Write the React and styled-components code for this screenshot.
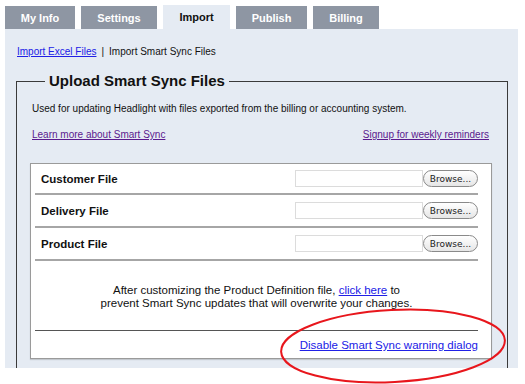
import React from 'react';
import styled, { createGlobalStyle } from 'styled-components';

const GlobalStyle = createGlobalStyle`
  html, body {
    margin: 0;
    padding: 0;
    background: #ffffff;
  }
  body {
    font-family: "Liberation Sans", Arial, sans-serif;
    color: #111;
  }
`;

const SPage = styled.div`
  position: relative;
  width: 525px;
  height: 384px;
  padding: 5px 0 0 5px;
  box-sizing: border-box;
  overflow: hidden;
`;

const STabBar = styled.div`
  display: flex;
  align-items: flex-end;
  gap: 6px;
  height: 24px;
`;

const STab = styled.div`
  display: flex;
  align-items: center;
  justify-content: center;
  width: ${props => props.width}px;
  height: ${props => (props.active ? 24 : 23)}px;
  background: ${props => (props.active ? '#e5ebf3' : '#8e96a3')};
  color: ${props => (props.active ? '#111' : '#ffffff')};
  font-size: 11px;
  font-weight: 700;
`;

const SPanel = styled.div`
  width: 513px;
  height: 339px;
  background: #e5ebf3;
  padding: 17px 10px 0 11px;
  box-sizing: border-box;
  overflow: hidden;
`;

const SCrumbs = styled.div`
  display: flex;
  align-items: center;
  gap: 5px;
  font-size: 10px;
  line-height: 12px;
  padding-left: 1px;
  margin-bottom: 13px;
`;

const SLink = styled.a`
  color: ${props => (props.visited ? '#5b1a8e' : '#2020e6')};
  text-decoration: underline;
  cursor: pointer;
`;

const SFieldset = styled.fieldset`
  margin: 0;
  padding: 0 15px 0 15px;
  border: 1px solid #3a3a3a;
  min-height: 400px;
`;

const SLegend = styled.legend`
  margin-left: 13px;
  padding: 0 4px;
  font-size: 15px;
  font-weight: 700;
  line-height: 20px;
`;

const SDesc = styled.p`
  margin: 11px 0 0;
  font-size: 10px;
  line-height: 13px;
`;

const SLinkRow = styled.div`
  display: flex;
  justify-content: space-between;
  margin: 13px 3px 0 0;
  font-size: 10px;
  line-height: 13px;
`;

const SBox = styled.div`
  margin: 22px 0 0 -2px;
  width: 462px;
  background: #ffffff;
  border: 1px solid #9a9a9a;
  box-shadow: 0 1px 1px rgba(0, 0, 0, 0.15);
  padding: 0 13px 4px 4px;
  box-sizing: border-box;
`;

const SRow = styled.div`
  display: flex;
  align-items: center;
  justify-content: space-between;
  height: 31px;
  padding-left: 6px;
  border-bottom: 2px solid #a6a6a6;

  &:first-child {
    height: 29px;
  }
`;

const SLabel = styled.span`
  font-size: 11.5px;
  font-weight: 700;
`;

const SFilePick = styled.div`
  display: flex;
  align-items: center;
`;

const SInput = styled.div`
  width: 128px;
  height: 17px;
  border: 1px solid #dcdcdc;
  box-sizing: border-box;
  background: #fff;
`;

const SBrowse = styled.button`
  width: 55px;
  height: 17px;
  padding: 0;
  border: 1px solid #8a8a8a;
  border-radius: 9px;
  background: linear-gradient(#ffffff, #e6e6e6);
  font-family: "DejaVu Sans", sans-serif;
  font-size: 9px;
  color: #222;
`;

const SNote = styled.p`
  margin: 0;
  padding: 23px 0 20px;
  text-align: center;
  font-size: 11.5px;
  line-height: 13px;
  border-bottom: 1px solid #555;
`;

const SFooter = styled.div`
  display: flex;
  justify-content: flex-end;
  padding: 7px 0 2px;
  font-size: 11.5px;
  line-height: 14px;
`;

const SCircle = styled.svg`
  position: absolute;
  left: 276px;
  top: 306px;
  pointer-events: none;
`;

const tabs = [
  { name: 'My Info', width: 70 },
  { name: 'Settings', width: 76 },
  { name: 'Import', width: 67, active: true },
  { name: 'Publish', width: 71 },
  { name: 'Billing', width: 66 },
];

const files = ['Customer File', 'Delivery File', 'Product File'];

const App = () => {
  return (
    <SPage>
      <GlobalStyle />
      <STabBar>
        {tabs.map(tab => (
          <STab key={tab.name} width={tab.width} active={tab.active}>
            {tab.name}
          </STab>
        ))}
      </STabBar>
      <SPanel>
        <SCrumbs>
          <SLink>Import Excel Files</SLink>
          <span>|</span>
          <span>Import Smart Sync Files</span>
        </SCrumbs>
        <SFieldset>
          <SLegend>Upload Smart Sync Files</SLegend>
          <SDesc>
            Used for updating Headlight with files exported from the billing or accounting system.
          </SDesc>
          <SLinkRow>
            <SLink visited>Learn more about Smart Sync</SLink>
            <SLink visited>Signup for weekly reminders</SLink>
          </SLinkRow>
          <SBox>
            {files.map(file => (
              <SRow key={file}>
                <SLabel>{file}</SLabel>
                <SFilePick>
                  <SInput />
                  <SBrowse>Browse...</SBrowse>
                </SFilePick>
              </SRow>
            ))}
            <SNote>
              After customizing the Product Definition file, <SLink>click here</SLink> to
              <br />
              prevent Smart Sync updates that will overwrite your changes.
            </SNote>
            <SFooter>
              <SLink>Disable Smart Sync warning dialog</SLink>
            </SFooter>
          </SBox>
        </SFieldset>
      </SPanel>
      <SCircle width="236" height="80" viewBox="0 0 236 80">
        <ellipse
          cx="117"
          cy="40"
          rx="112"
          ry="36"
          fill="none"
          stroke="#e8161c"
          strokeWidth="2"
          transform="rotate(-3 117 40)"
        />
      </SCircle>
    </SPage>
  );
};

export default App;
